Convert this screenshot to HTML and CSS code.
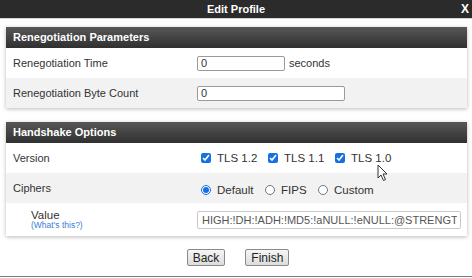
FILE: index.html
```html
<!DOCTYPE html>
<html lang="en">
<head>
    <meta charset="UTF-8">
    <title>Edit Profile</title>
    <link rel="stylesheet" href="styles.css">
</head>
<body>
    <div class="titlebar">
        <span class="title">Edit Profile</span>
        <span class="close">X</span>
    </div>

    <div class="content">
        <div class="panel">
            <div class="panel-head">Renegotiation Parameters</div>
            <div class="row">
                <label for="renegTime">Renegotiation Time</label>
                <div class="ctrl">
                    <input type="text" id="renegTime" class="txt short" value="0">
                    <span class="unit">seconds</span>
                </div>
            </div>
            <div class="row alt">
                <label for="renegBytes">Renegotiation Byte Count</label>
                <div class="ctrl">
                    <input type="text" id="renegBytes" class="txt medium" value="0">
                </div>
            </div>
        </div>

        <div class="panel">
            <div class="panel-head">Handshake Options</div>
            <div class="row">
                <label>Version</label>
                <div class="ctrl opts">
                    <label class="opt"><input type="checkbox" checked> TLS 1.2</label>
                    <label class="opt"><input type="checkbox" checked> TLS 1.1</label>
                    <label class="opt"><input type="checkbox" checked> TLS 1.0</label>
                </div>
            </div>
            <div class="row alt">
                <label>Ciphers</label>
                <div class="ctrl opts radios">
                    <label class="opt"><input type="radio" name="ciphers" checked> Default</label>
                    <label class="opt"><input type="radio" name="ciphers"> FIPS</label>
                    <label class="opt"><input type="radio" name="ciphers"> Custom</label>
                </div>
            </div>
            <div class="row tall">
                <div class="sub-label">
                    <span>Value</span>
                    <a href="#" class="help">(What's this?)</a>
                </div>
                <div class="ctrl">
                    <input type="text" class="txt long" value="HIGH:!DH:!ADH:!MD5:!aNULL:!eNULL:@STRENGTH">
                </div>
            </div>
        </div>

        <div class="actions">
            <button class="btn">Back</button>
            <button class="btn">Finish</button>
        </div>
    </div>

    <div class="footer-line"></div>

    <svg class="cursor" width="12" height="18" viewBox="0 0 12 18">
        <path d="M1 1 L1 14 L4 11 L6.5 16.5 L8.5 15.5 L6 10 L10 10 Z" fill="#fff" stroke="#333" stroke-width="1"/>
    </svg>
</body>
</html>
```

FILE: styles.css
```css
body {
    margin: 0;
    font-family: "Liberation Sans", Arial, sans-serif;
    font-size: 11px;
    color: #333;
    background: #fff;
    width: 472px;
    height: 278px;
    overflow: hidden;
    position: relative;
}

.titlebar {
    height: 18px;
    background: #2b2b2b;
    border-bottom: 1px solid #d4d4d4;
    color: #fff;
    font-weight: bold;
    display: flex;
    align-items: center;
    justify-content: center;
    position: relative;
}

.title {
    font-size: 11px;
}

.close {
    position: absolute;
    right: 3px;
    top: 2px;
    font-size: 12px;
}

.content {
    padding: 8px 5px 0 6px;
}

.panel {
    background: #fff;
    box-shadow: 0 1px 4px rgba(0, 0, 0, 0.28);
    margin-bottom: 14px;
}

.panel-head {
    height: 21px;
    line-height: 21px;
    padding-left: 7px;
    color: #fff;
    font-weight: bold;
    background: linear-gradient(#575757, #303030);
}

.row {
    display: grid;
    grid-template-columns: 184px 1fr;
    align-items: center;
    height: 30px;
    padding-left: 7px;
}

.row.alt {
    background: #f2f2f2;
}

.row.tall {
    height: 33px;
}

.ctrl {
    display: flex;
    align-items: center;
}

.txt {
    height: 15px;
    box-sizing: border-box;
    border: 1px solid #9a9a9a;
    border-radius: 2px;
    padding: 0 3px;
    font-family: "Liberation Sans", Arial, sans-serif;
    font-size: 11px;
    color: #333;
    background: #fff;
    margin: 0;
}

.short {
    width: 88px;
}

.medium {
    width: 148px;
}

.long {
    width: 264px;
    height: 18px;
    font-size: 11px;
    color: #555;
    border-color: #c8c8c8;
    padding-left: 4px;
}

.unit {
    margin-left: 4px;
}

.opts {
    gap: 0;
}

.opt {
    display: flex;
    align-items: center;
    font-size: 11.5px;
}

.opts .opt:nth-child(1) {
    width: 67px;
}

.opts .opt:nth-child(2) {
    width: 67px;
}

.radios .opt:nth-child(1) {
    width: 64px;
}

.radios .opt:nth-child(2) {
    width: 53px;
}

.radios {
    padding-top: 4px;
}

.opt input {
    width: 10px;
    height: 10px;
    margin: 0 6px 0 4px;
    accent-color: #1570e0;
}

.sub-label {
    padding-left: 18px;
    display: flex;
    flex-direction: column;
    line-height: 11px;
    font-size: 11.5px;
}

.help {
    color: #3b7dd8;
    font-size: 8.5px;
    text-decoration: none;
    line-height: 9px;
}

.actions {
    display: flex;
    justify-content: center;
    gap: 20px;
    margin-top: -1px;
    padding-left: 3px;
}

.btn {
    height: 17px;
    padding: 0 5px;
    font-family: "Liberation Sans", Arial, sans-serif;
    font-size: 12px;
    color: #222;
    background: linear-gradient(#f6f6f6, #dcdcdc);
    border: 1px solid #8a8a8a;
    border-radius: 2px;
}

.footer-line {
    position: absolute;
    left: 0;
    right: 0;
    top: 276px;
    border-top: 1px solid #7a7a7a;
}

.cursor {
    position: absolute;
    left: 377px;
    top: 164px;
}
```
